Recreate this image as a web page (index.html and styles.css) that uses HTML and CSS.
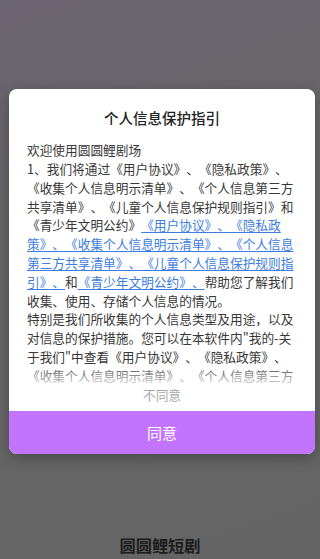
FILE: index.html
```html
<!DOCTYPE html>
<html lang="zh-CN">
<head>
<meta charset="utf-8">
<title>个人信息保护指引</title>
<link rel="stylesheet" href="styles.css">
</head>
<body>
<div class="page">
  <div class="card">
    <h1 class="title">个人信息保护指引</h1>
    <div class="body">
      <div class="scroll">
        <p class="text">欢迎使用圆圆鲤剧场<br>1、我们将通过《用户协议》、《隐私政策》、《收集个人信息明示清单》、《个人信息第三方共享清单》、《儿童个人信息保护规则指引》和《青少年文明公约》<a class="link">《用户协议》、《隐私政策》、《收集个人信息明示清单》、《个人信息第三方共享清单》、《儿童个人信息保护规则指引》、</a>和<a class="link">《青少年文明公约》、</a>帮助您了解我们收集、使用、存储个人信息的情况。<br>特别是我们所收集的个人信息类型及用途，以及对信息的保护措施。您可以在本软件内"我的-关于我们"中查看《用户协议》、《隐私政策》、《收集个人信息明示清单》、《个人信息第三方共享清单》、《儿童个人信息保护规则指引》和《青少年文明公约》。</p>
      </div>
      <div class="fade"></div>
    </div>
    <div class="decline">不同意</div>
    <div class="agree">同意</div>
  </div>
  <div class="brand">圆圆鲤短剧</div>
</div>
</body>
</html>
```
FILE: styles.css
```css
* { box-sizing: border-box; }
html, body { margin: 0; padding: 0; }
body {
  width: 320px;
  height: 559px;
  overflow: hidden;
  font-family: "Noto Sans CJK SC", "Noto Sans", sans-serif;
  text-spacing-trim: space-all;
  background: linear-gradient(160deg, #6b6471 0%, #686669 30%, #666666 60%, #646464 100%);
}
.page {
  height: 559px;
  display: flex;
  flex-direction: column;
}
.card {
  margin: 89px 0 0 9px;
  width: 306px;
  background: #fff;
  border-radius: 8px;
  overflow: hidden;
  box-shadow: 0 4px 14px rgba(0, 0, 0, 0.28);
  display: flex;
  flex-direction: column;
}
.title {
  margin: 0;
  padding-top: 19px;
  height: 52.3px;
  font-size: 14.5px;
  line-height: 20px;
  font-weight: 500;
  color: #222;
  text-align: center;
}
.body {
  position: relative;
}
.scroll {
  height: 244.4px;
  overflow: hidden;
  padding: 0 18px;
}
.text {
  margin: 0;
  font-size: 12.7px;
  line-height: 18.8px;
  color: #383838;
  text-spacing-trim: space-all;
}
.link {
  color: #3d7de0;
  text-decoration: underline;
  text-decoration-thickness: 1px;
  text-underline-offset: 2px;
}
.fade {
  position: absolute;
  left: 0;
  right: 0;
  bottom: 0;
  height: 22px;
  background: linear-gradient(rgba(255, 255, 255, 0), rgba(255, 255, 255, 0.85));
}
.decline {
  height: 25.3px;
  font-size: 12.7px;
  line-height: 18px;
  color: #a8a8a8;
  text-align: center;
}
.agree {
  height: 43px;
  background: #c274ff;
  color: #fff;
  font-size: 15px;
  line-height: 43px;
  text-align: center;
}
.brand {
  margin-top: auto;
  padding-bottom: 4px;
  font-size: 16.2px;
  line-height: 20px;
  font-weight: 700;
  color: #1c1c1c;
  text-align: center;
}
```
